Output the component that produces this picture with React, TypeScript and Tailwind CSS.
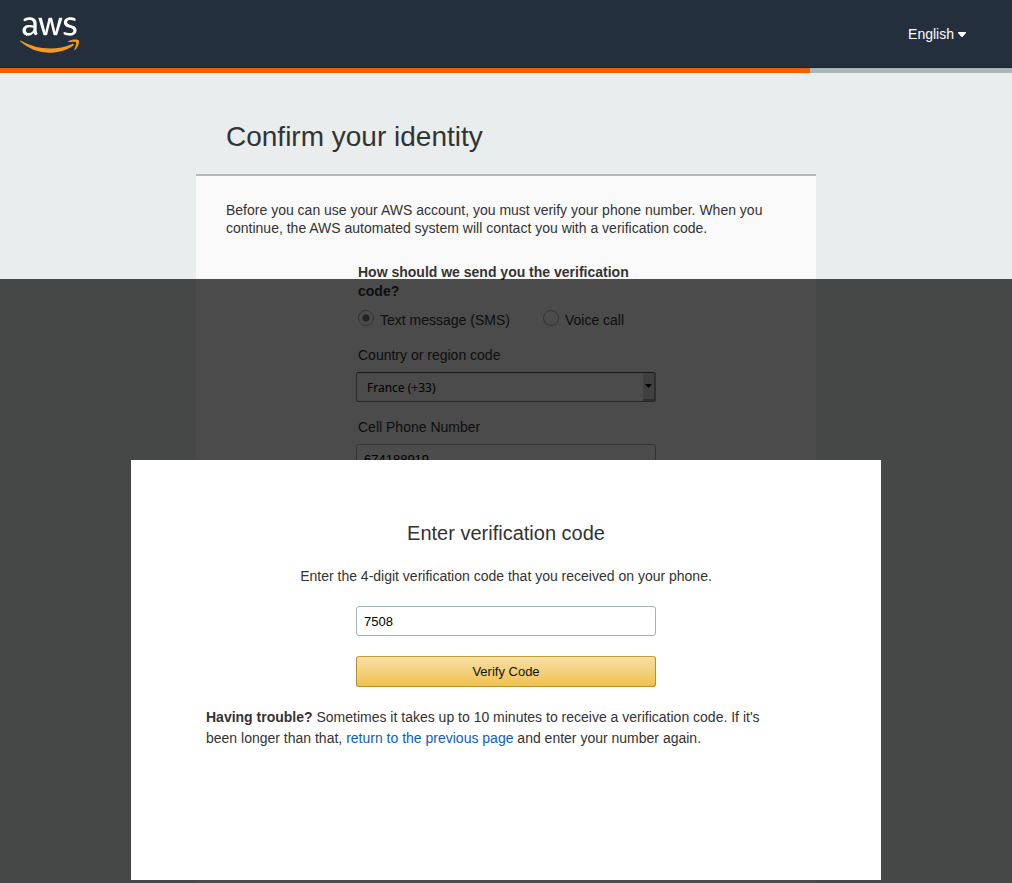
import { FaAws } from "react-icons/fa";

function Header() {
  return (
    <header>
      <div className="flex h-[68px] items-center justify-between border-b border-[#1c2632] bg-[#242f3e] pl-5 pr-[46px]">
        <a href="#home" aria-label="AWS home" className="block pt-[3px]">
          <svg width="0" height="0" className="absolute" aria-hidden="true">
            <linearGradient id="aws-two-tone" x1="0" y1="0" x2="0" y2="1">
              <stop offset="0.61" stopColor="#ffffff" />
              <stop offset="0.61" stopColor="#f8981d" />
            </linearGradient>
          </svg>
          <FaAws className="h-12 w-[59px] fill-[url(#aws-two-tone)]" />
        </a>
        <button type="button" className="flex items-center gap-1 text-sm text-white">
          English
          <svg width="8" height="5" viewBox="0 0 8 5" fill="currentColor" className="mt-0.5" aria-hidden="true">
            <path d="M0 0h8v1L4.5 5h-1L0 1z" />
          </svg>
        </button>
      </div>
      <div className="h-[5px] bg-[#a9b7b7]">
        <div className="h-full w-4/5 bg-[#f06000]" />
      </div>
    </header>
  );
}

function MethodOption({ label, checked }: { label: string; checked?: boolean }) {
  return (
    <label className="flex items-start gap-1.5">
      <input
        type="radio"
        name="method"
        defaultChecked={checked}
        className="size-4 appearance-none rounded-full border border-[#aaaaaa] bg-[#fafafa] checked:bg-[radial-gradient(circle,#777777_3px,transparent_4px)]"
      />
      {label}
    </label>
  );
}

function IdentityForm() {
  return (
    <main className="mx-auto max-w-[620px] pt-[46px]">
      <h1 className="px-[30px] pb-[19px] text-[28px] leading-9">Confirm your identity</h1>
      <div className="min-h-[720px] border-t-2 border-[#b7b9b9] bg-[#fafafa] px-[30px] pt-[25px]">
        <p className="leading-[18px]">
          Before you can use your AWS account, you must verify your phone number. When you continue, the AWS
          automated system will contact you with a verification code.
        </p>
        <form className="mx-auto mt-[26px] w-[300px]">
          <fieldset>
            <legend className="px-0.5 font-bold leading-[19px]">
              How should we send you the verification code?
            </legend>
            <div className="mt-[9px] flex gap-[33px] px-0.5 leading-5">
              <MethodOption label="Text message (SMS)" checked />
              <MethodOption label="Voice call" />
            </div>
          </fieldset>
          <label htmlFor="country" className="mt-[15px] block px-0.5 leading-5">
            Country or region code
          </label>
          <div className="relative mt-[7px]">
            <select
              id="country"
              defaultValue="fr"
              className="block h-[30px] w-full appearance-none rounded-[3px] border border-[#888888] border-t-[#555555] bg-[#fafafa] px-2.5 pt-0.5 font-['Noto_Sans',sans-serif] text-xs text-black"
            >
              <option value="fr">France (+33)</option>
            </select>
            <span className="pointer-events-none absolute bottom-px right-0 top-px flex w-[13px] items-center justify-center rounded-r-[3px] border-b-2 border-r-2 border-[#999999] bg-[#d8d8d8]">
              <svg width="7" height="4" viewBox="0 0 7 4" fill="#000000" aria-hidden="true">
                <path d="M0 0h7L3.5 4z" />
              </svg>
            </span>
          </div>
          <label htmlFor="phone" className="mt-[15px] block px-0.5 leading-5">
            Cell Phone Number
          </label>
          <input
            id="phone"
            type="tel"
            defaultValue="674188919"
            className="mt-[7px] block h-[30px] w-full rounded-[3px] border border-[#a2b3b3] bg-white px-[7px] text-[13px] text-black"
          />
        </form>
      </div>
    </main>
  );
}

function VerificationDialog() {
  return (
    <div className="absolute inset-x-0 bottom-0 top-[279px] bg-black/70 pt-[181px]">
      <section
        role="dialog"
        aria-labelledby="dialog-title"
        className="mx-auto min-h-[420px] max-w-[750px] bg-white px-[75px] pt-[60px]"
      >
        <h2 id="dialog-title" className="text-center text-xl leading-[26px]">
          Enter verification code
        </h2>
        <form>
          <label htmlFor="code" className="mt-5 block text-center leading-5">
            Enter the 4-digit verification code that you received on your phone.
          </label>
          <input
            id="code"
            type="text"
            defaultValue="7508"
            className="mx-auto mt-5 block h-[30px] w-[300px] rounded-[3px] border border-[#a2b3b3] bg-white px-[7px] text-[13px] text-black"
          />
          <button
            type="button"
            className="mx-auto mt-5 block h-[31px] w-[300px] rounded-[3px] border border-[#b78f25] border-t-[#c39f3e] bg-linear-to-b from-[#f7dfa5] to-[#f0c14b] pt-0.5 text-[13px] text-[#111111]"
          >
            Verify Code
          </button>
        </form>
        <p className="mt-5 max-w-[580px] leading-[21px]">
          <strong>Having trouble?</strong> Sometimes it takes up to 10 minutes to receive a verification code. If
          it's been longer than that,{" "}
          <a href="#previous" className="text-[#1060b4]">
            return to the previous page
          </a>{" "}
          and enter your number again.
        </p>
      </section>
    </div>
  );
}

export default function App() {
  return (
    <div className="relative h-screen overflow-hidden bg-[#e9eded] font-['Liberation_Sans',Arial,sans-serif] text-sm text-[#333333]">
      <Header />
      <IdentityForm />
      <VerificationDialog />
    </div>
  );
}
